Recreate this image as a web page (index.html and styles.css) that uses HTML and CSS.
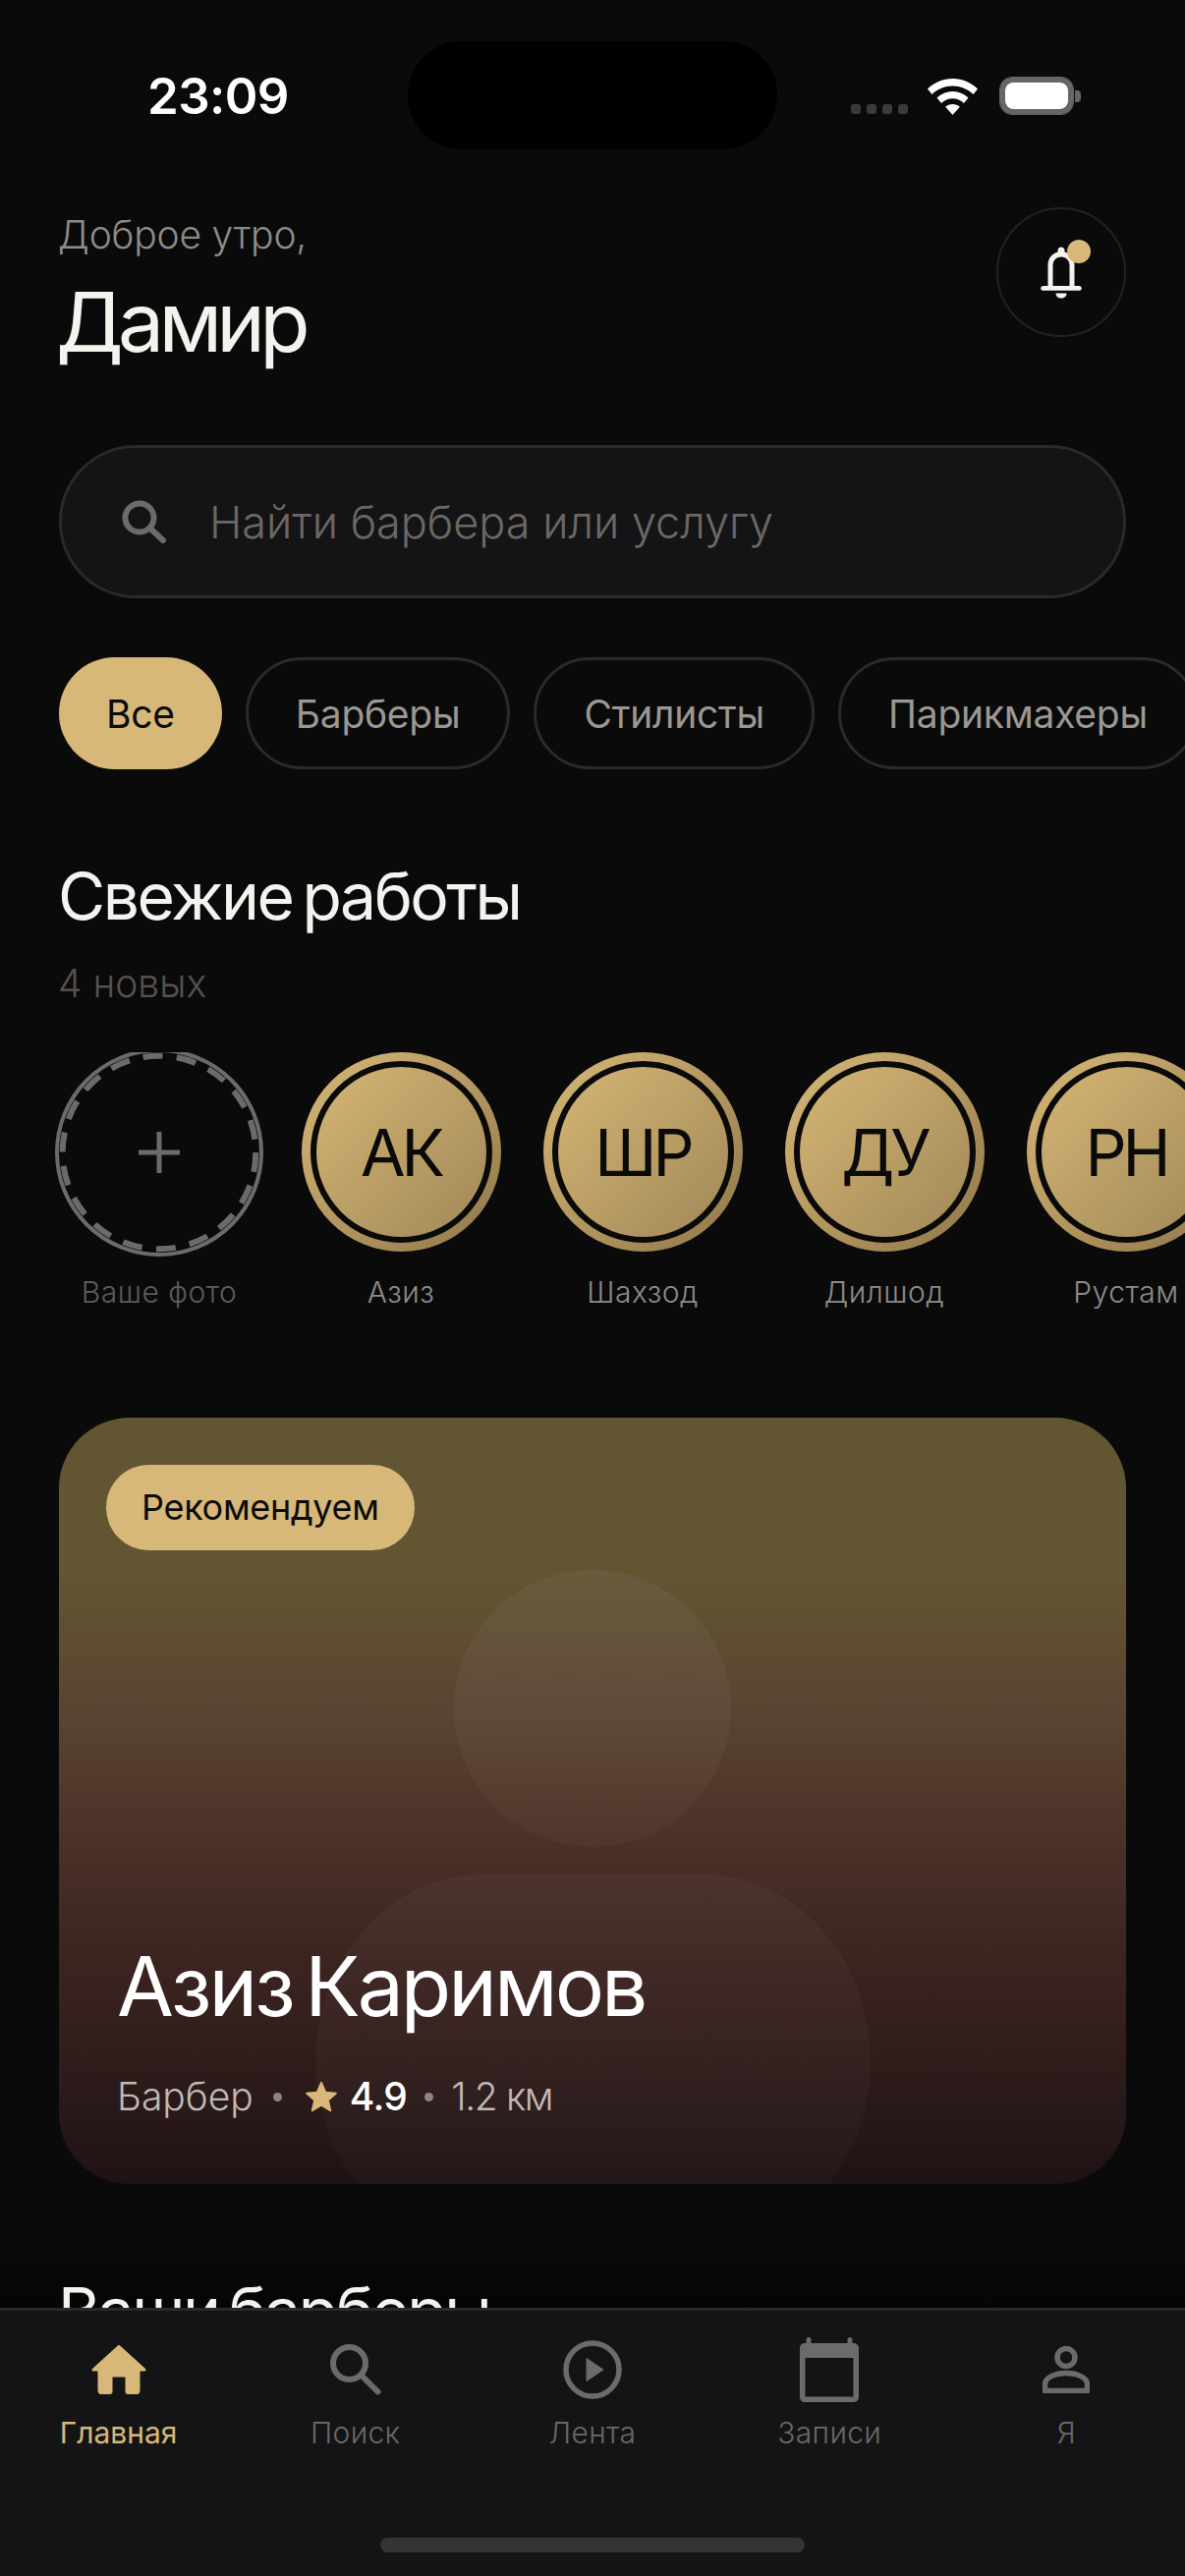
FILE: index.html
```html
<!DOCTYPE html>
<html lang="ru">
<head>
    <meta charset="UTF-8">
    <meta name="viewport" content="width=device-width, initial-scale=1.0">
    <title>Главная</title>
    <link rel="stylesheet" href="styles.css">
</head>
<body>
    <div class="screen">
        <div class="status-bar">
            <span class="time">23:09</span>
            <div class="island"></div>
            <div class="status-icons">
                <div class="signal"><i></i><i></i><i></i><i></i></div>
                <svg class="wifi" viewBox="0 0 51 37">
                    <path d="M25.5 0C35 0 44 3.800 51 10.500L46.500 16C40.800 10.500 33.400 7.500 25.500 7.500S10.200 10.500 4.500 16L0 10.500C7 3.800 16 0 25.500 0Z" fill="#fff"/>
                    <path d="M25.500 13C31.500 13 37 15.300 41.500 19.500L37 25C33.800 22 29.800 20.300 25.500 20.300S17.200 22 14 25L9.500 19.500C14 15.300 19.500 13 25.500 13Z" fill="#fff"/>
                    <path d="M25.500 26C28.300 26 30.800 27 32.800 28.800L25.500 37L18.200 28.800C20.200 27 22.700 26 25.500 26Z" fill="#fff"/>
                </svg>
                <div class="battery"><div class="battery-fill"></div></div>
                <div class="battery-cap"></div>
            </div>
        </div>

        <header class="top">
            <div>
                <p class="greeting">Доброе утро,</p>
                <h1 class="user-name">Дамир</h1>
            </div>
            <button class="bell">
                <svg viewBox="0 0 42 54" width="42" height="54">
                    <path d="M21 1.500C23 1.500 24.500 3 24.500 5V6.500C31 8.200 34.500 13.500 34.500 20V41H39C40.600 41 41.800 42 41.800 43.400S40.600 45.800 39 45.800H3C1.400 45.800 .2 44.800 .2 43.400S1.400 41 3 41H7.500V20C7.500 13.500 11 8.200 17.500 6.500V5C17.500 3 19 1.500 21 1.500ZM21 11.500C15.500 11.500 12.500 15.500 12.500 20.500V41H29.500V20.500C29.500 15.500 26.500 11.500 21 11.500Z" fill="#f5f3ee"/>
                    <path d="M15.500 48.500H26.500C26.500 51.500 24 53.500 21 53.500S15.500 51.500 15.500 48.500Z" fill="#f5f3ee"/>
                </svg>
                <span class="bell-dot"></span>
            </button>
        </header>

        <div class="search">
            <svg class="search-icon" viewBox="0 0 46 44">
                <circle cx="18" cy="18" r="14.500" fill="none" stroke="#6b6b69" stroke-width="6"/>
                <path d="M28.500 28.500L42 41" fill="none" stroke="#6b6b69" stroke-width="6" stroke-linecap="round"/>
            </svg>
            <span class="search-text">Найти барбера или услугу</span>
        </div>

        <div class="chips">
            <span class="chip active">Все</span>
            <span class="chip">Барберы</span>
            <span class="chip">Стилисты</span>
            <span class="chip">Парикмахеры</span>
        </div>

        <h2 class="section-title">Свежие работы</h2>
        <p class="section-sub">4 новых</p>

        <div class="stories">
            <div class="story">
                <svg class="add-ring" viewBox="0 0 212 212">
                    <circle cx="106" cy="106" r="104" fill="none" stroke="#6b6b69" stroke-width="4"/>
                    <circle cx="106" cy="106" r="98.300" fill="none" stroke="#6b6b69" stroke-width="6" stroke-dasharray="20 14.310"/>
                    <path d="M85 106H127M106 85V127" fill="none" stroke="#6b6b69" stroke-width="5"/>
                </svg>
                <span class="story-name muted">Ваше фото</span>
            </div>
            <div class="story">
                <div class="avatar"><div class="avatar-inner">АК</div></div>
                <span class="story-name">Азиз</span>
            </div>
            <div class="story">
                <div class="avatar"><div class="avatar-inner">ШР</div></div>
                <span class="story-name">Шахзод</span>
            </div>
            <div class="story">
                <div class="avatar"><div class="avatar-inner">ДУ</div></div>
                <span class="story-name">Дилшод</span>
            </div>
            <div class="story">
                <div class="avatar"><div class="avatar-inner">РН</div></div>
                <span class="story-name">Рустам</span>
            </div>
        </div>

        <section class="card">
            <div class="figure-head"></div>
            <div class="figure-body"></div>
            <span class="badge">Рекомендуем</span>
            <div class="card-info">
                <h2 class="card-name">Азиз Каримов</h2>
                <div class="card-meta">
                    <span>Барбер</span>
                    <i class="meta-dot"></i>
                    <svg class="star" viewBox="0 0 32 31">
                        <path d="M16 1L20.200 10.700L30.800 11.700L22.800 18.700L25.200 29.200L16 23.700L6.800 29.200L9.200 18.700L1.200 11.700L11.800 10.700Z" fill="#d8b878" stroke="#d8b878" stroke-width="2" stroke-linejoin="round"/>
                    </svg>
                    <span class="rating">4.9</span>
                    <i class="meta-dot near"></i>
                    <span class="distance">1.2 км</span>
                </div>
            </div>
        </section>

        <h2 class="section-title next">Ваши барберы</h2>

        <nav class="tabbar">
            <div class="tabs">
                <div class="tab active">
                    <div class="tab-icon">
                        <svg width="56" height="50" viewBox="0 0 56 50">
                            <path d="M28 0L55 24.500C55.500 25.500 55 26 54 26H49V46.500C49 48.500 47.500 50 45.500 50H37.500C36 50 35 49 35 47.500V32H21V47.500C21 49 20 50 18.500 50H10.500C8.500 50 7 48.500 7 46.500V26H2C1 26 .5 25.500 1 24.500Z" fill="#d8b878" stroke="#d8b878" stroke-linejoin="round"/>
                        </svg>
                    </div>
                    <span>Главная</span>
                </div>
                <div class="tab">
                    <div class="tab-icon">
                        <svg width="52" height="52" viewBox="0 0 52 52">
                            <circle cx="19.500" cy="19.500" r="16.500" fill="none" stroke="#6b6b69" stroke-width="6"/>
                            <path d="M32 32L48.500 48.500" fill="none" stroke="#6b6b69" stroke-width="6" stroke-linecap="round"/>
                        </svg>
                    </div>
                    <span>Поиск</span>
                </div>
                <div class="tab">
                    <div class="tab-icon">
                        <svg width="60" height="60" viewBox="0 0 60 60">
                            <circle cx="30" cy="30" r="27" fill="none" stroke="#6b6b69" stroke-width="5.500"/>
                            <path d="M24 18.500L41 30L24 41.500Z" fill="#6b6b69" stroke="#6b6b69" stroke-linejoin="round"/>
                        </svg>
                    </div>
                    <span>Лента</span>
                </div>
                <div class="tab">
                    <div class="tab-icon">
                        <svg width="60" height="66" viewBox="0 0 60 66">
                            <path d="M9 0C10.500 0 11.500 1 11.500 2.500V6H48.500V2.500C48.500 1 49.500 0 51 0S53.500 1 53.500 2.500V6H55C57.800 6 60 8.200 60 11V61C60 63.800 57.800 66 55 66H5C2.200 66 0 63.800 0 61V11C0 8.200 2.200 6 5 6H6.500V2.500C6.500 1 7.500 0 9 0ZM5.500 21V60.500H54.500V21Z" fill="#6b6b69" fill-rule="evenodd"/>
                        </svg>
                    </div>
                    <span>Записи</span>
                </div>
                <div class="tab">
                    <div class="tab-icon">
                        <svg width="48" height="48" viewBox="0 0 48 48">
                            <circle cx="24" cy="11.500" r="9" fill="none" stroke="#6b6b69" stroke-width="5.500"/>
                            <path d="M2.500 45.500V39C2.500 32 13 27.500 24 27.500S45.500 32 45.500 39V45.500Z" fill="none" stroke="#6b6b69" stroke-width="5.500" stroke-linejoin="round"/>
                        </svg>
                    </div>
                    <span>Я</span>
                </div>
            </div>
            <div class="home-indicator"></div>
        </nav>
    </div>
</body>
</html>
```
FILE: styles.css
```css
* {
    box-sizing: border-box;
}
body {
    margin: 0;
    background-color: #0a0a0a;
    font-family: Inter, "Noto Sans", sans-serif;
}
h1, h2, p {
    margin: 0;
    font-weight: 400;
}
.screen {
    position: relative;
    width: 1206px;
    height: 2622px;
    overflow: hidden;
    background: linear-gradient(180deg, #0a0a0a 2270px, #050505 2349px);
}

/* status bar */
.status-bar {
    position: relative;
    display: flex;
    justify-content: space-between;
    align-items: flex-start;
    height: 211px;
    padding: 68px 106px 0 150px;
}
.time {
    font-size: 51px;
    line-height: 60px;
    font-weight: 600;
    letter-spacing: -0.6px;
    color: #fff;
}
.island {
    position: absolute;
    left: 415px;
    top: 42px;
    width: 376px;
    height: 110px;
    border-radius: 55px;
    background-color: #000;
}
.status-icons {
    display: flex;
    align-items: flex-end;
    padding-top: 10px;
}
.signal {
    display: flex;
    gap: 6px;
    margin-right: 20px;
    margin-bottom: 1px;
}
.signal i {
    width: 10px;
    height: 10px;
    border-radius: 3px;
    background-color: #3a3a3a;
}
.wifi {
    width: 51px;
    height: 37px;
    margin-right: 22px;
}
.battery {
    width: 76px;
    height: 39px;
    padding: 5px;
    border: 1px solid #666;
    box-shadow: inset 0 0 0 5px #666;
    border-radius: 13px;
}
.battery-fill {
    width: 100%;
    height: 100%;
    border-radius: 8px;
    background-color: #fff;
}
.battery-cap {
    width: 6px;
    height: 12px;
    margin: 0 0 13px 1px;
    border-radius: 0 4px 4px 0;
    background-color: #666;
}

/* header */
.top {
    display: flex;
    justify-content: space-between;
    align-items: flex-start;
    padding: 0 60px;
}
.greeting {
    margin: 4px 0 0 -1px;
    font-size: 39px;
    line-height: 48px;
    font-weight: 300;
    letter-spacing: -0.2px;
    color: #8f8c87;
}
.user-name {
    margin: 17px 0 0 -3px;
    font-size: 84px;
    line-height: 96px;
    letter-spacing: -5.8px;
    color: #f5f3ee;
}
.bell {
    position: relative;
    display: flex;
    align-items: center;
    justify-content: center;
    width: 132px;
    height: 132px;
    padding: 0;
    border: 2px solid #222;
    border-radius: 50%;
    background: none;
}
.bell-dot {
    position: absolute;
    top: 31px;
    left: 70px;
    width: 24px;
    height: 24px;
    border-radius: 50%;
    background-color: #d8b878;
}

/* search */
.search {
    display: flex;
    align-items: center;
    height: 156px;
    margin: 77px 60px 0;
    padding-left: 61px;
    border: 3px solid #2a2a2a;
    border-radius: 78px;
    background-color: #141416;
}
.search-icon {
    width: 46px;
    height: 44px;
    margin-right: 43px;
}
.search-text {
    font-size: 45px;
    font-weight: 300;
    color: #6b6864;
}

/* chips */
.chips {
    display: flex;
    gap: 24px;
    margin-top: 60px;
    padding-left: 60px;
}
.chip {
    flex: none;
    display: flex;
    align-items: center;
    height: 114px;
    padding: 0 48px;
    border: 3px solid #2a2a2a;
    border-radius: 57px;
    font-size: 39px;
    letter-spacing: -0.25px;
    color: #9b9893;
}
.chip.active {
    border: none;
    background-color: #d8b878;
    color: #0a0a0a;
}

/* sections */
.section-title {
    margin: 0 0 0 59px;
    padding-top: 90px;
    font-size: 66px;
    line-height: 78px;
    letter-spacing: -2.5px;
    word-spacing: -6px;
    color: #f5f3ee;
}
.section-sub {
    margin: 26px 0 0 59px;
    font-size: 39px;
    line-height: 48px;
    font-weight: 300;
    color: #55524f;
}

/* stories */
.stories {
    display: flex;
    gap: 43px;
    height: 270px;
    margin-top: 46px;
    padding-left: 60.5px;
    overflow: hidden;
}
.story {
    flex: none;
    display: flex;
    flex-direction: column;
    align-items: center;
    width: 203px;
}
.add-ring {
    flex: none;
    width: 212px;
    height: 212px;
    margin: -4.5px;
}
.avatar {
    flex: none;
    width: 203px;
    height: 203px;
    padding: 9px;
    border-radius: 50%;
    background: linear-gradient(135deg, #d8b878, #8f7748);
}
.avatar-inner {
    display: flex;
    align-items: center;
    justify-content: center;
    width: 100%;
    height: 100%;
    border: 6px solid #0a0a0a;
    border-radius: 50%;
    background: linear-gradient(135deg, #d4b574, #a08858);
    background-clip: padding-box;
    font-size: 66px;
    letter-spacing: -4px;
    color: #0a0a0a;
}
.story-name {
    margin-top: 21px;
    font-size: 30px;
    line-height: 40px;
    font-weight: 300;
    letter-spacing: 0.5px;
    white-space: nowrap;
    color: #8f8c87;
}
.story-name.muted {
    color: #5f5c59;
}

/* recommended card */
.card {
    position: relative;
    display: flex;
    flex-direction: column;
    justify-content: space-between;
    height: 780px;
    margin: 102px 60px 0;
    padding: 48px;
    overflow: hidden;
    border-radius: 72px;
    background: linear-gradient(180deg, #625632 0%, #625632 20%, #5a4332 39%, #4b3127 55%, #3b2420 71%, #2b1a1a 88%, #1f1214 100%);
}
.figure-head {
    position: absolute;
    left: 402px;
    top: 155px;
    width: 282px;
    height: 282px;
    border-radius: 50%;
    background: linear-gradient(180deg, rgba(180, 170, 200, 0.07), rgba(220, 190, 140, 0.04));
}
.figure-body {
    position: absolute;
    left: 261px;
    top: 465px;
    width: 565px;
    height: 380px;
    border-radius: 170px / 190px;
    background: linear-gradient(180deg, rgba(255, 220, 210, 0.035), rgba(255, 220, 210, 0.02));
}
.badge {
    position: relative;
    align-self: flex-start;
    height: 87px;
    padding: 0 36px;
    border-radius: 44px;
    background-color: #d8b878;
    font-size: 36px;
    line-height: 87px;
    letter-spacing: -0.3px;
    color: #0a0a0a;
}
.card-info {
    position: relative;
    padding: 0 0 18px 11px;
}
.card-name {
    font-size: 84px;
    line-height: 100px;
    letter-spacing: -3px;
    word-spacing: -8px;
    color: #fff;
}
.card-meta {
    display: flex;
    align-items: center;
    margin-top: 39px;
    font-size: 39px;
    line-height: 46px;
    font-weight: 300;
    color: #c0bab6;
}
.meta-dot {
    width: 9px;
    height: 9px;
    margin: 0 20px;
    border-radius: 50%;
    background-color: #8a8580;
}
.meta-dot.near {
    margin: 0 18px;
}
.star {
    width: 32px;
    height: 31px;
    margin: 0 13px 0 4px;
}
.rating {
    font-weight: 500;
    letter-spacing: -0.6px;
    color: #fff;
}
.distance {
    letter-spacing: -1.4px;
}
.section-title.next {
    padding-top: 90px;
}

/* tab bar */
.tabbar {
    position: absolute;
    left: 0;
    right: 0;
    bottom: 0;
    height: 273px;
    border-top: 3px solid #2a2a2a;
    background-color: #141416;
}
.tabs {
    display: grid;
    grid-template-columns: repeat(5, 1fr);
    padding-top: 24px;
}
.tab {
    display: flex;
    flex-direction: column;
    align-items: center;
    font-size: 30px;
    line-height: 38px;
    font-weight: 300;
    letter-spacing: 0.3px;
    color: #6b6864;
}
.tab.active {
    font-weight: 400;
    letter-spacing: 0;
    color: #d8b878;
}
.tab-icon {
    display: flex;
    align-items: center;
    justify-content: center;
    height: 72px;
    margin-bottom: 9px;
}
.home-indicator {
    position: absolute;
    left: 387px;
    bottom: 24px;
    width: 432px;
    height: 15px;
    border-radius: 8px;
    background-color: #333;
}
```
